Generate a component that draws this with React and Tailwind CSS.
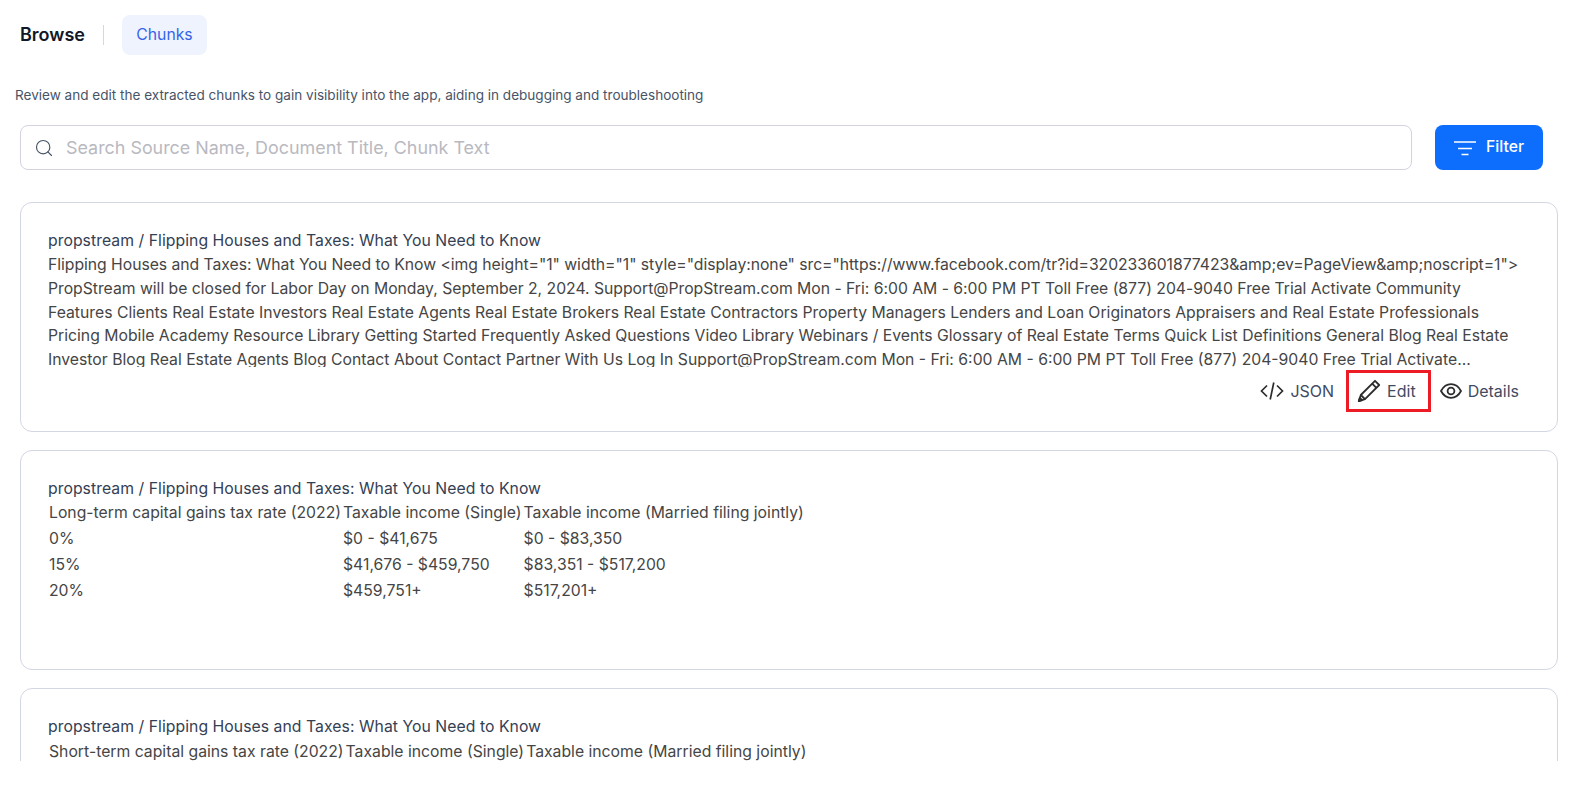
import React from "react";
import { Search } from "lucide-react";

const title = "propstream / Flipping Houses and Taxes: What You Need to Know";

const longText = [
  { text: 'Flipping Houses and Taxes: What You Need to Know <img height="1" width="1" style="display:none" src="https://www.facebook.com/tr?id=320233601877423&amp;ev=PageView&amp;noscript=1">', cls: "tracking-[-0.04px]" },
  { text: "PropStream will be closed for Labor Day on Monday, September 2, 2024. Support@PropStream.com Mon - Fri: 6:00 AM - 6:00 PM PT Toll Free (877) 204-9040 Free Trial Activate Community", cls: "tracking-[-0.02px]" },
  { text: "Features Clients Real Estate Investors Real Estate Agents Real Estate Brokers Real Estate Contractors Property Managers Lenders and Loan Originators Appraisers and Real Estate Professionals", cls: "" },
  { text: "Pricing Mobile Academy Resource Library Getting Started Frequently Asked Questions Video Library Webinars / Events Glossary of Real Estate Terms Quick List Definitions General Blog Real Estate", cls: "" },
  { text: "Investor Blog Real Estate Agents Blog Contact About Contact Partner With Us Log In Support@PropStream.com Mon - Fri: 6:00 AM - 6:00 PM PT Toll Free (877) 204-9040 Free Trial Activate...", cls: "" },
];

const longTerm = [
  ["Long-term capital gains tax rate (2022)", "Taxable income (Single)", "Taxable income (Married filing jointly)"],
  ["0%", "$0 - $41,675", "$0 - $83,350"],
  ["15%", "$41,676 - $459,750", "$83,351 - $517,200"],
  ["20%", "$459,751+", "$517,201+"],
];

function FilterIcon() {
  return (
    <svg width="22" height="16" viewBox="0 0 22 16" fill="none" stroke="white" strokeWidth="1.6">
      <path d="M0 2H22M4 8.5H18M7.5 14.5H14.5" />
    </svg>
  );
}

function CodeIcon() {
  return (
    <svg width="24" height="24" viewBox="0 0 24 24" fill="none" stroke="#2d2d2d" strokeWidth="1.7">
      <path d="M7 6.5L1.5 12L7 17.5M17 6.5L22.5 12L17 17.5M13.8 3.5L10.2 20.5" />
    </svg>
  );
}

function PencilIcon() {
  return (
    <svg width="24" height="24" viewBox="0 0 24 24" fill="none" stroke="#2d2d2d" strokeWidth="1.8" strokeLinejoin="round">
      <path d="M18 1.8L22.2 6L8 20.2L1.8 22.2L3.8 16Z" />
      <path d="M15.2 4.6L19.4 8.8M3.8 16L8 20.2" />
      <path d="M1.8 22.2L2.8 18.8L5.2 21.2Z" fill="#2d2d2d" />
    </svg>
  );
}

function EyeIcon() {
  return (
    <svg width="22" height="22" viewBox="0 0 22 22" fill="none" stroke="#2d2d2d" strokeWidth="1.8">
      <path d="M1 11C3.5 6.4 7 4.2 11 4.2C15 4.2 18.5 6.4 21 11C18.5 15.6 15 17.8 11 17.8C7 17.8 3.5 15.6 1 11Z" />
      <circle cx="11" cy="11" r="3.4" />
    </svg>
  );
}

function Action({ icon, label, className }) {
  return (
    <div className={"flex items-center gap-[6px] h-[42px] " + className}>
      {icon}
      <span className="text-[16px] text-[#3f4b63]">{label}</span>
    </div>
  );
}

function ChunkTable({ rows }) {
  return (
    <table className="border-separate border-spacing-0 text-[15.75px] text-[#454545]">
      <tbody>
        {rows.map((row, i) => (
          <tr key={i} className="h-[26px]">
            {row.map((cell, j) => (
              <td key={j} className="px-[1px] py-0 whitespace-nowrap">{cell}</td>
            ))}
          </tr>
        ))}
      </tbody>
    </table>
  );
}

export default function App() {
  return (
    <div className="h-[787px] bg-white font-['Inter',sans-serif] overflow-hidden">
      <div className="h-[761px] overflow-hidden">
        <div className="flex items-center h-[40px] mt-[15px] ml-[20px]">
          <span className="text-[18px] leading-[40px] font-semibold text-[#111827]">Browse</span>
          <div className="w-px h-[20px] bg-[#d5d8e0] ml-[18px] mr-[18px]"></div>
          <div className="flex items-center justify-center w-[85px] h-[40px] rounded-lg bg-[#eff3fe] text-[15.75px] text-[#3563e9]">Chunks</div>
        </div>

        <p className="mt-[31px] ml-[15px] h-[18px] text-[13.55px] leading-[18px] text-[#475467]">
          Review and edit the extracted chunks to gain visibility into the app, aiding in debugging and troubleshooting
        </p>

        <div className="flex items-center mt-[21px] ml-[20px]">
          <div className="flex items-center w-[1392px] h-[45px] pl-[13px] rounded-lg border border-[#d3d3df]">
            <Search size={20} strokeWidth={1.4} className="text-[#475467]" />
            <span className="ml-[12px] mt-[2px] text-[17.9px] text-[#b9b9bf]">Search Source Name, Document Title, Chunk Text</span>
          </div>
          <button className="flex items-center justify-center gap-[10px] ml-[23px] w-[108px] h-[45px] rounded-lg bg-[#0d6efd] text-[15.75px] font-medium text-white">
            <FilterIcon />
            <span className="-mt-[1px]">Filter</span>
          </button>
        </div>

        <div className="flex flex-col gap-[18px] mt-[32px] ml-[20px] w-[1538px]">
          <div className="h-[230px] rounded-xl border border-[#d3d7e2] pl-[27px] pt-[26px]">
            <div className="text-[15.75px] tracking-[0.05px] leading-[24px] text-[#344054]">{title}</div>
            <div className="h-[114px] overflow-hidden text-[15.75px] leading-[23.75px] text-[#454545] whitespace-nowrap">
              {longText.map((line, i) => (
                <div key={i} className={line.cls}>{line.text}</div>
              ))}
            </div>
            <div className="flex justify-end items-center mt-[3px] pr-[26px]">
              <Action className="px-[12px]" label="JSON" icon={<CodeIcon />} />
              <Action className="pl-[8px] pr-[12px] border-[3px] border-[#ed1c24]" label="Edit" icon={<PencilIcon />} />
              <Action className="pl-[9px] pr-[12px]" label="Details" icon={<EyeIcon />} />
            </div>
          </div>

          <div className="h-[220px] rounded-xl border border-[#d3d7e2] pl-[27px] pt-[26px]">
            <div className="text-[15.75px] tracking-[0.05px] leading-[23px] text-[#344054]">{title}</div>
            <ChunkTable rows={longTerm} />
          </div>

          <div className="h-[230px] rounded-xl border border-[#d3d7e2] pl-[27px] pt-[26px]">
            <div className="text-[15.75px] tracking-[0.05px] leading-[24px] text-[#344054]">{title}</div>
            <ChunkTable rows={[["Short-term capital gains tax rate (2022)", "Taxable income (Single)", "Taxable income (Married filing jointly)"]]} />
          </div>
        </div>
      </div>
    </div>
  );
}
